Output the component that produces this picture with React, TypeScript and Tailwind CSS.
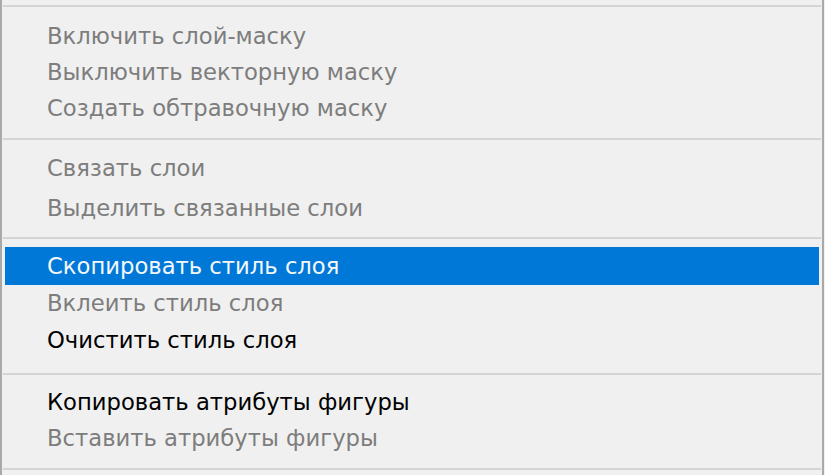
import React from 'react';

type Item = { label: string; state: 'disabled' | 'enabled' | 'active'; h: string };

const groups: Item[][] = [
  [
    { label: 'Включить слой-маску', state: 'disabled', h: 'h-9' },
    { label: 'Выключить векторную маску', state: 'disabled', h: 'h-9' },
    { label: 'Создать обтравочную маску', state: 'disabled', h: 'h-9' },
  ],
  [
    { label: 'Связать слои', state: 'disabled', h: 'h-10' },
    { label: 'Выделить связанные слои', state: 'disabled', h: 'h-10' },
  ],
  [
    { label: 'Скопировать стиль слоя', state: 'active', h: 'h-[38px]' },
    { label: 'Вклеить стиль слоя', state: 'disabled', h: 'h-[37px]' },
    { label: 'Очистить стиль слоя', state: 'enabled', h: 'h-[37px]' },
  ],
  [
    { label: 'Копировать атрибуты фигуры', state: 'enabled', h: 'h-9' },
    { label: 'Вставить атрибуты фигуры', state: 'disabled', h: 'h-9' },
  ],
];

const MenuItem = ({ item }: { item: Item }) => {
  const color =
    item.state === 'active'
      ? 'bg-[#0078d7] text-[#f4f8fc]'
      : item.state === 'enabled'
        ? 'text-black'
        : 'text-[#7d7d7d]';
  return (
    <div className={`${item.h} flex items-center pl-[42px] mx-[3px] whitespace-nowrap ${color}`}>
      {item.label}
    </div>
  );
};

const Separator = () => <div className="h-[2px] mx-[1px] bg-[#d4d4d4]" />;

export default function App() {
  return (
    <div className="w-[825px] h-[475px] overflow-hidden bg-[#f0f0f0]">
      <div
        className="w-[824px] h-full border-l-2 border-r-2 border-[#a9a9a9] bg-[#f0f0f0] text-[22.7px] leading-none pt-[5px]"
        style={{ fontFamily: '"DejaVu Sans", "Noto Sans", sans-serif' }}
      >
        <Separator />
        <div className="pt-[11px] pb-[12px]">
          {groups[0].map((it) => (
            <MenuItem key={it.label} item={it} />
          ))}
        </div>
        <Separator />
        <div className="pt-[8px] pb-[9px]">
          {groups[1].map((it) => (
            <MenuItem key={it.label} item={it} />
          ))}
        </div>
        <Separator />
        <div className="pt-[8px] pb-[14px]">
          {groups[2].map((it) => (
            <MenuItem key={it.label} item={it} />
          ))}
        </div>
        <Separator />
        <div className="pt-[9px] pb-[12px]">
          {groups[3].map((it) => (
            <MenuItem key={it.label} item={it} />
          ))}
        </div>
        <Separator />
      </div>
    </div>
  );
}
